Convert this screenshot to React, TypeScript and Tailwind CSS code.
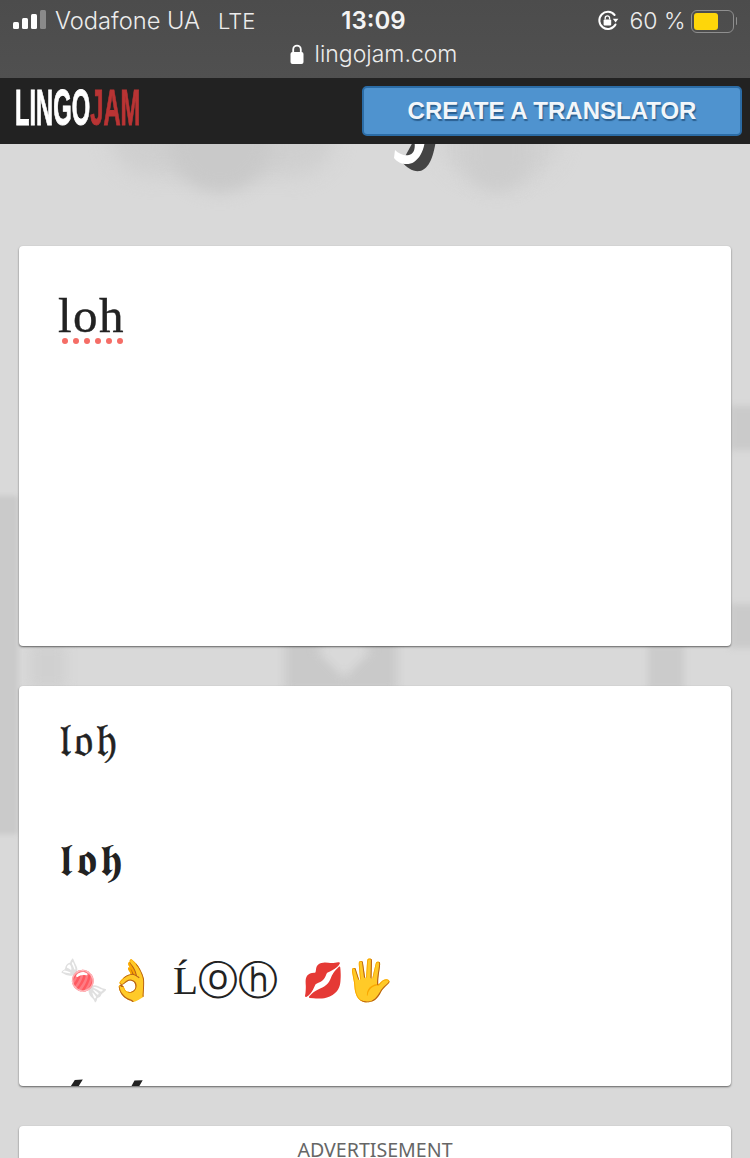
import React from "react";

const SANS = "font-['Liberation_Sans',Arial,sans-serif]";
const STATUS = "font-['Inter','Liberation_Sans',sans-serif]";

function Signal() {
  return (
    <svg width="34" height="24" viewBox="0 0 34 24" fill="none">
      <rect x="0" y="13" width="6" height="7" rx="1.5" fill="#fff" />
      <rect x="9" y="9" width="6" height="11" rx="1.5" fill="#fff" />
      <rect x="18" y="5" width="6" height="15" rx="1.5" fill="#fff" />
      <rect x="27" y="1" width="6" height="19" rx="1.5" fill="#8a8a8a" />
    </svg>
  );
}

function RotationLock() {
  return (
    <svg width="22" height="22" viewBox="0 0 22 22" fill="none">
      <path d="M18.5 14.5A8.6 8.6 0 1 1 17.6 5" stroke="#fff" strokeWidth="2" strokeLinecap="round" />
      <path d="M15.8 8.8h5.6l-2.8 3.6z" fill="#fff" />
      <rect x="6.6" y="9.6" width="7.6" height="6" rx="1" fill="#fff" />
      <path d="M8.2 9.6V8a2.2 2.2 0 0 1 4.4 0v1.6" stroke="#fff" strokeWidth="1.3" />
    </svg>
  );
}

function Battery() {
  return (
    <div className="flex items-center gap-[2px]">
      <div className="flex h-[23px] w-[43px] items-center rounded-[6px] border-[1.5px] border-[#8f8f8f] p-[2px]">
        <div className="h-full w-[24px] rounded-[3px] bg-[#fed60a]" />
      </div>
      <div className="h-[8px] w-[1.5px] rounded-r bg-[#8f8f8f]" />
    </div>
  );
}

function StatusBar() {
  return (
    <div className={`relative h-[78px] bg-gradient-to-b from-[#4c4c4c] to-[#505050] text-white ${STATUS}`}>
      <div className="flex h-[42px] items-center pl-[13px] pr-[13px]">
        <Signal />
        <span className="ml-[8px] text-[23.7px] font-light text-[#ececec]">Vodafone UA</span>
        <span className="ml-[18px] text-[22px] font-light text-[#ececec]">LTE</span>
        <span className="ml-[86px] text-[24px] font-semibold text-[#f4f4f4]">13:09</span>
        <div className="ml-auto flex items-center">
          <RotationLock />
          <span className="ml-[10px] text-[23px] font-light text-[#ececec]">60 %</span>
          <span className="ml-[5px]">
            <Battery />
          </span>
        </div>
      </div>
      <div className="flex items-center justify-center gap-[11px] pr-[3px] text-[23px] font-light leading-[24px] text-[#ececec]">
        <svg width="14" height="20" viewBox="0 0 14 20" fill="#fff">
          <rect x="0.5" y="8" width="13" height="12" rx="2" />
          <path d="M3.2 9V5.4a3.8 3.8 0 0 1 7.6 0V9" fill="none" stroke="#fff" strokeWidth="1.8" />
        </svg>
        <span>lingojam.com</span>
      </div>
    </div>
  );
}

function Header() {
  return (
    <div className={`relative z-10 flex h-[66px] items-center justify-between bg-[#222222] pl-[15px] pr-[8px] ${SANS}`}>
      <div className="mt-[-6px] h-[38px] w-[125px]">
        <div className="origin-top-left scale-x-[0.475] whitespace-nowrap text-[50px] font-bold leading-[38px] text-white [-webkit-text-stroke:1px_currentColor]">
          LINGO<span className="text-[#b93434]">JAM</span>
        </div>
      </div>
      <div className="flex h-[50px] w-[380px] items-center justify-center rounded-[5px] border-2 border-[#2b6ca6] bg-[#4f93cf] text-[24px] font-bold text-[#f2f6fa] [text-shadow:1px_2px_1px_#2a5f8f]">
        CREATE A TRANSLATOR
      </div>
    </div>
  );
}

// blurred giant title that sits behind the cards
function Backdrop() {
  return (
    <div className="absolute inset-0 overflow-hidden">
      <div className="absolute left-[110px] top-[-50px] h-[82px] w-[225px] rounded-full bg-[#cfcfcf] blur-[10px]" />
      <div className="absolute left-[170px] top-[-50px] h-[98px] w-[100px] rounded-full bg-[#c9c9c9] blur-[8px]" />
      <div className="absolute left-[440px] top-[-50px] h-[85px] w-[120px] rounded-full bg-[#d1d1d1] blur-[10px]" />
      <div className="absolute left-[465px] top-[-50px] h-[98px] w-[65px] rounded-full bg-[#cdcdcd] blur-[8px]" />
      <div className="absolute left-[-10px] top-[352px] h-[338px] w-[28px] bg-[#cacaca] blur-[2px]" />
      <div className="absolute left-[730px] top-[262px] h-[44px] w-[30px] bg-[#cacaca] blur-[3px]" />
      <div className="absolute left-[730px] top-[460px] h-[44px] w-[30px] bg-[#cacaca] blur-[3px]" />
      <div className="absolute left-[30px] top-[500px] h-[44px] w-[36px] bg-[#d0d0d0] blur-[6px]" />
      <div className="absolute left-[285px] top-[495px] h-[52px] w-[112px] bg-[#c9c9c9] blur-[5px]" />
      <div className="absolute left-[325px] top-[488px] h-[38px] w-[38px] rotate-45 bg-[#d9d9d9] blur-[5px]" />
      <div className="absolute left-[648px] top-[500px] h-[46px] w-[36px] bg-[#cbcbcb] blur-[3px]" />
      <svg className="absolute left-[390px] top-0" width="50" height="30" viewBox="0 0 50 30" fill="none">
        <path d="M46 -4C44 8 41 24 30 27 23 28 17 24 12 18L24 -4z" fill="#444" />
        <path d="M24 -4C26 4 24 10 19 11 14 12 9 10 5 6L4 14C8 20 18 22 24 18 30 14 34 6 35 -4z" fill="#fff" />
      </svg>
    </div>
  );
}

function Card({ className, children }: { className: string; children: React.ReactNode }) {
  return (
    <div className={`relative overflow-hidden rounded-[4px] bg-white shadow-[0_1px_2px_rgba(0,0,0,0.55)] ${className}`}>
      {children}
    </div>
  );
}

export default function App() {
  return (
    <div className="h-[1158px] w-[750px] overflow-hidden bg-[#d9d9d9]">
      <StatusBar />
      <Header />
      <div className="relative h-[1014px]">
        <Backdrop />
        <div className="relative flex flex-col gap-[40px] px-[19px] pt-[102px]">
          <Card className="h-[400px]">
            <div className="pl-[39px] pt-[37px]">
              <div className="font-['Liberation_Serif',serif] text-[49px] leading-[66px] tracking-[1.5px] text-[#222] [-webkit-text-stroke:0.4px_#222]">
                loh
              </div>
              <div className="ml-[4px] mt-[-11px] flex gap-[5px]">
                {[0, 1, 2, 3, 4, 5].map((i) => (
                  <span key={i} className="h-[6px] w-[6px] rounded-full bg-[#f56d66]" />
                ))}
              </div>
            </div>
          </Card>
          <Card className="h-[400px]">
            <div className="flex flex-col pl-[40px] pt-[24px] font-['DejaVu_Sans','DejaVu_Serif',serif] leading-[60px] text-[#222]">
              <div className="h-[120px] text-[46px] tracking-[3px] [-webkit-text-stroke:0.5px_#222]">𝔩𝔬𝔥</div>
              <div className="h-[120px] text-[46px] tracking-[3px]">𝖑𝖔𝖍</div>
              <div className="flex h-[120px] items-start text-[40px]">
                <span className="w-[48px]">🍬</span>
                <span className="w-[66px]">👌</span>
                <span className="w-[25px] font-['Liberation_Serif',serif] text-[41px]">Ĺ</span>
                <span className="w-[40px] font-['DejaVu_Sans',sans-serif]">ⓞ</span>
                <span className="w-[64px] font-['DejaVu_Sans',sans-serif]">ⓗ</span>
                <span className="w-[42px] text-[34px]">💋</span>
                <span>🖐</span>
              </div>
              <div className="ml-[-7px] h-[120px] text-[58px] tracking-[5px]">𝓵𝓸𝓱</div>
            </div>
          </Card>
          <Card className="h-[200px]">
            <div className="pt-[12px] text-center font-['Noto_Sans',sans-serif] text-[19.6px] leading-[24px] text-[#666]">
              ADVERTISEMENT
            </div>
          </Card>
        </div>
      </div>
    </div>
  );
}
